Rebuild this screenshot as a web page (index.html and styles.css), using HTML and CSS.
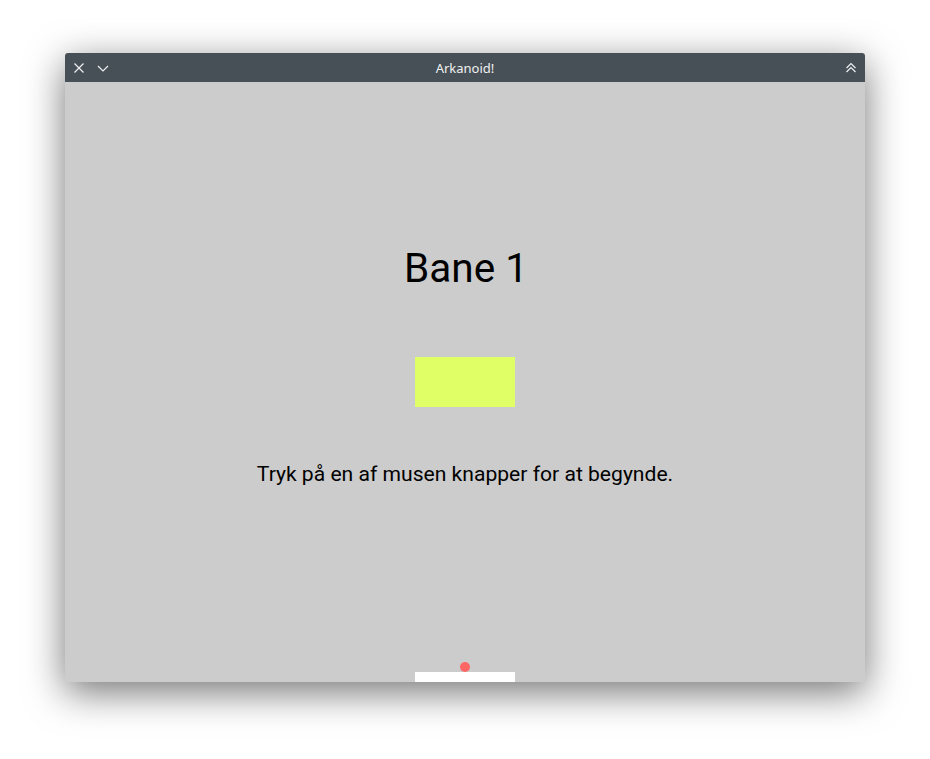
FILE: index.html
```html
<!DOCTYPE html>
<html lang="da">
<head>
<meta charset="utf-8">
<title>Arkanoid!</title>
<link rel="stylesheet" href="styles.css">
</head>
<body>
<div class="window">
  <div class="titlebar">
    <div class="tb-left">
      <svg class="ico" width="12" height="12" viewBox="0 0 12 12"><path d="M1.5 1.5 L10.5 10.5 M10.5 1.5 L1.5 10.5" stroke="#eff0f1" stroke-width="1.2" fill="none"/></svg>
      <svg class="ico" width="12" height="12" viewBox="0 0 12 12"><path d="M1 4 L6 9 L11 4" stroke="#eff0f1" stroke-width="1.2" fill="none"/></svg>
    </div>
    <div class="title">Arkanoid!</div>
    <div class="tb-right">
      <svg class="ico" width="12" height="12" viewBox="0 0 12 12"><path d="M1.5 6 L6 1.5 L10.5 6 M1.5 10 L6 5.5 L10.5 10" stroke="#eff0f1" stroke-width="1.2" fill="none"/></svg>
    </div>
  </div>
  <div class="game">
    <h1 class="level">Bane 1</h1>
    <div class="brick"></div>
    <p class="hint">Tryk på en af musen knapper for at begynde.</p>
    <div class="ball"></div>
    <div class="paddle"></div>
  </div>
</div>
</body>
</html>
```

FILE: styles.css
```css
html, body {
  margin: 0;
  padding: 0;
  background: #ffffff;
}
body {
  width: 930px;
  height: 759px;
  overflow: hidden;
  padding: 53px 0 0 65px;
  box-sizing: border-box;
}
.window {
  width: 800px;
  border-radius: 3px 3px 0 0;
  box-shadow: 0 10px 38px rgba(0, 0, 0, 0.55);
  display: flex;
  flex-direction: column;
}
.titlebar {
  height: 29px;
  background: #475057;
  border-radius: 3px 3px 0 0;
  display: flex;
  align-items: center;
  font-family: "Noto Sans", sans-serif;
  font-size: 13px;
  color: #eff0f1;
}
.tb-left {
  display: flex;
  align-items: center;
  gap: 12px;
  padding-left: 8px;
  width: 120px;
}
.title {
  flex: 1;
  text-align: center;
  padding-top: 1px;
}
.tb-right {
  width: 120px;
  display: flex;
  justify-content: flex-end;
  padding-right: 8px;
}
.ico {
  display: block;
}
.game {
  height: 600px;
  background: #cccccc;
  position: relative;
  display: flex;
  flex-direction: column;
  align-items: center;
  font-family: Roboto, "Liberation Sans", sans-serif;
  color: #000000;
}
.level {
  margin: 162px 0 0 0;
  padding-left: 2px;
  font-size: 40.5px;
  font-weight: 400;
  line-height: 48px;
}
.brick {
  margin-top: 65px;
  width: 100px;
  height: 50px;
  background: #e0ff66;
}
.hint {
  margin: 55px 0 0 0;
  font-size: 21.1px;
  line-height: 24px;
}
.ball {
  position: absolute;
  left: 395px;
  top: 580px;
  width: 10px;
  height: 10px;
  border-radius: 50%;
  background: #ff6666;
}
.paddle {
  position: absolute;
  left: 350px;
  top: 590px;
  width: 100px;
  height: 10px;
  background: #ffffff;
}
```
